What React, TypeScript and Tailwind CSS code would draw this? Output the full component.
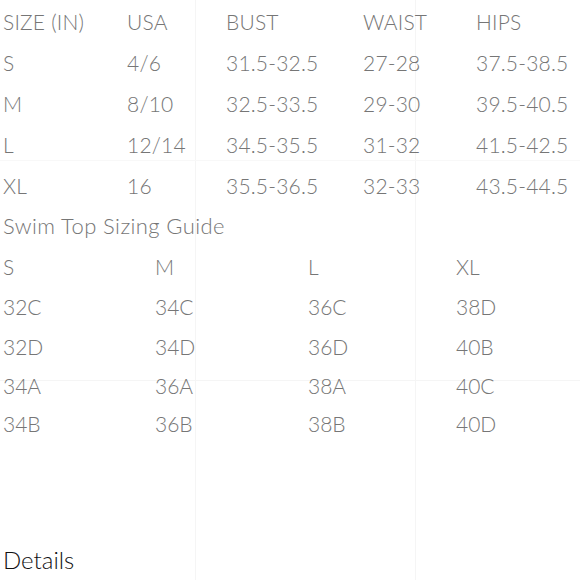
const sizes = [
  ["SIZE (IN)", "USA", "BUST", "WAIST", "HIPS"],
  ["S", "4/6", "31.5-32.5", "27-28", "37.5-38.5"],
  ["M", "8/10", "32.5-33.5", "29-30", "39.5-40.5"],
  ["L", "12/14", "34.5-35.5", "31-32", "41.5-42.5"],
  ["XL", "16", "35.5-36.5", "32-33", "43.5-44.5"],
];

const topCols = ["w-[124px]", "w-[99px]", "w-[137px]", "w-[113px]", "flex-1"];

const swim = [
  ["S", "M", "L", "XL"],
  ["32C", "34C", "36C", "38D"],
  ["32D", "34D", "36D", "40B"],
  ["34A", "36A", "38A", "40C"],
  ["34B", "36B", "38B", "40D"],
];

const swimCols = ["w-[152px]", "w-[153px]", "w-[148px]", "flex-1"];
const swimRowH = ["h-[40px]", "h-[40px]", "h-[40px]", "h-[38px]", "h-[38px]"];

export default function App() {
  return (
    <div className="relative h-[580px] w-[580px] overflow-hidden bg-white font-['Lato',sans-serif] text-[#767676]">
      {/* faint grid lines from the source collage */}
      <div className="absolute left-[195px] top-0 h-full w-px bg-[#f5f5f5]" />
      <div className="absolute left-[415px] top-0 h-full w-px bg-[#f5f5f5]" />
      <div className="absolute left-0 top-[160px] h-px w-full bg-[#f8f8f8]" />
      <div className="absolute left-0 top-[380px] h-px w-full bg-[#f5f5f5]" />

      <div className="relative flex flex-col pl-[3px] pt-[1px]">
        {sizes.map((row, i) => (
          <div key={i} className="flex h-[41px] items-center text-[21px] font-light leading-none tracking-[0.2px]">
            {row.map((c, j) => (
              <span key={j} className={topCols[j]}>
                {c}
              </span>
            ))}
          </div>
        ))}

        <div className="flex h-[40px] items-center text-[22px] font-light leading-none tracking-[0.4px]">
          Swim Top Sizing Guide
        </div>

        {swim.map((row, i) => (
          <div key={i} className={`flex ${swimRowH[i]} items-center text-[21px] font-light leading-none`}>
            {row.map((c, j) => (
              <span key={j} className={swimCols[j]}>
                {c}
              </span>
            ))}
          </div>
        ))}

        <div className="mt-[106px] text-[24px] font-light leading-none text-[#111111]">Details</div>
      </div>
    </div>
  );
}
